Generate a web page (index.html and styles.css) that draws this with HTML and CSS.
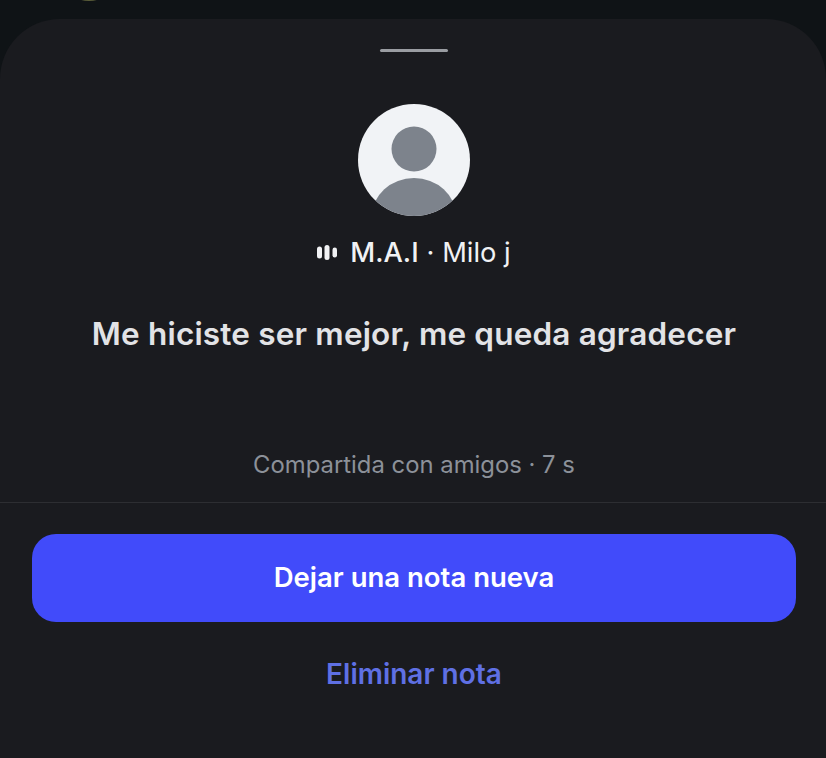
FILE: index.html
```html
<!DOCTYPE html>
<html lang="es">
<head>
    <meta charset="UTF-8">
    <meta name="viewport" content="width=device-width, initial-scale=1.0">
    <title>Nota</title>
    <link rel="stylesheet" href="styles.css">
</head>
<body>
    <div class="peek-dot"></div>
    <div class="sheet">
        <div class="note-head">
            <div class="handle"></div>
            <svg class="avatar" width="112" height="112" viewBox="0 0 112 112">
                <defs>
                    <clipPath id="avatar-clip"><circle cx="56" cy="56" r="56"/></clipPath>
                </defs>
                <circle cx="56" cy="56" r="56" fill="#f1f3f6"/>
                <g clip-path="url(#avatar-clip)" fill="#7d838c">
                    <circle cx="56" cy="45" r="22.5"/>
                    <ellipse cx="56" cy="112" rx="42" ry="38"/>
                </g>
            </svg>
            <div class="track">
                <svg class="bars" width="20" height="15" viewBox="0 0 20 15">
                    <rect x="0" y="1.5" width="5" height="12" rx="2.5"/>
                    <rect x="7.5" y="0" width="5" height="15" rx="2.5"/>
                    <rect x="15.5" y="2.5" width="4.5" height="10" rx="2.25"/>
                </svg>
                <span class="track-name">M.A.I</span>
                <span class="track-artist">· Milo j</span>
            </div>
            <p class="note-text">Me hiciste ser mejor, me queda agradecer</p>
        </div>
        <p class="note-meta">Compartida con amigos · 7 s</p>
        <div class="actions">
            <button class="btn-primary">Dejar una nota nueva</button>
            <button class="btn-link">Eliminar nota</button>
        </div>
    </div>
</body>
</html>
```

FILE: styles.css
```css
html, body {
    height: 100%;
}
body {
    margin: 0;
    background-color: #0f1316;
    font-family: Inter, "Liberation Sans", sans-serif;
    overflow: hidden;
    position: relative;
}
.peek-dot {
    position: absolute;
    top: -9px;
    left: 76px;
    width: 26px;
    height: 10px;
    border-radius: 50%;
    background-color: #5c5f3a;
}
.sheet {
    box-sizing: border-box;
    height: 739px;
    margin-top: 19px;
    padding-top: 30px;
    background-color: #1a1b1f;
    border-radius: 60px 60px 0 0;
    display: flex;
    flex-direction: column;
}
.note-head {
    padding-left: 2px;
    display: flex;
    flex-direction: column;
    align-items: center;
}
.handle {
    width: 68px;
    height: 3px;
    border-radius: 2px;
    background-color: #9a9da2;
}
.avatar {
    display: block;
    margin-top: 52px;
}
.track {
    display: flex;
    align-items: center;
    margin-top: 20px;
    height: 32px;
    font-size: 27.3px;
    color: #f1f2f4;
}
.bars {
    fill: #f1f2f4;
    margin-right: 13px;
}
.track-name {
    font-weight: 500;
    margin-right: 8px;
}
.note-text {
    margin: 48px 0 0;
    font-size: 31.5px;
    line-height: 36px;
    font-weight: 600;
    letter-spacing: 0.18px;
    color: #e2e3e6;
}
.note-meta {
    margin: 99px 0 0;
    padding-left: 2px;
    padding-bottom: 23px;
    border-bottom: 1px solid #2d2e32;
    text-align: center;
    font-size: 23.85px;
    line-height: 28px;
    color: #8c9199;
}
.actions {
    box-sizing: border-box;
    width: 100%;
    padding: 31px 30px 0 32px;
    display: flex;
    flex-direction: column;
    align-items: stretch;
}
.actions button {
    font-family: inherit;
    border: none;
    cursor: pointer;
}
.btn-primary {
    height: 88px;
    padding-bottom: 3px;
    border-radius: 24px;
    background-color: #414bfa;
    color: #ffffff;
    font-size: 27.5px;
    font-weight: 600;
}
.btn-link {
    margin-top: 32px;
    height: 40px;
    background: none;
    color: #5f70e4;
    font-size: 28px;
    font-weight: 600;
}
```
